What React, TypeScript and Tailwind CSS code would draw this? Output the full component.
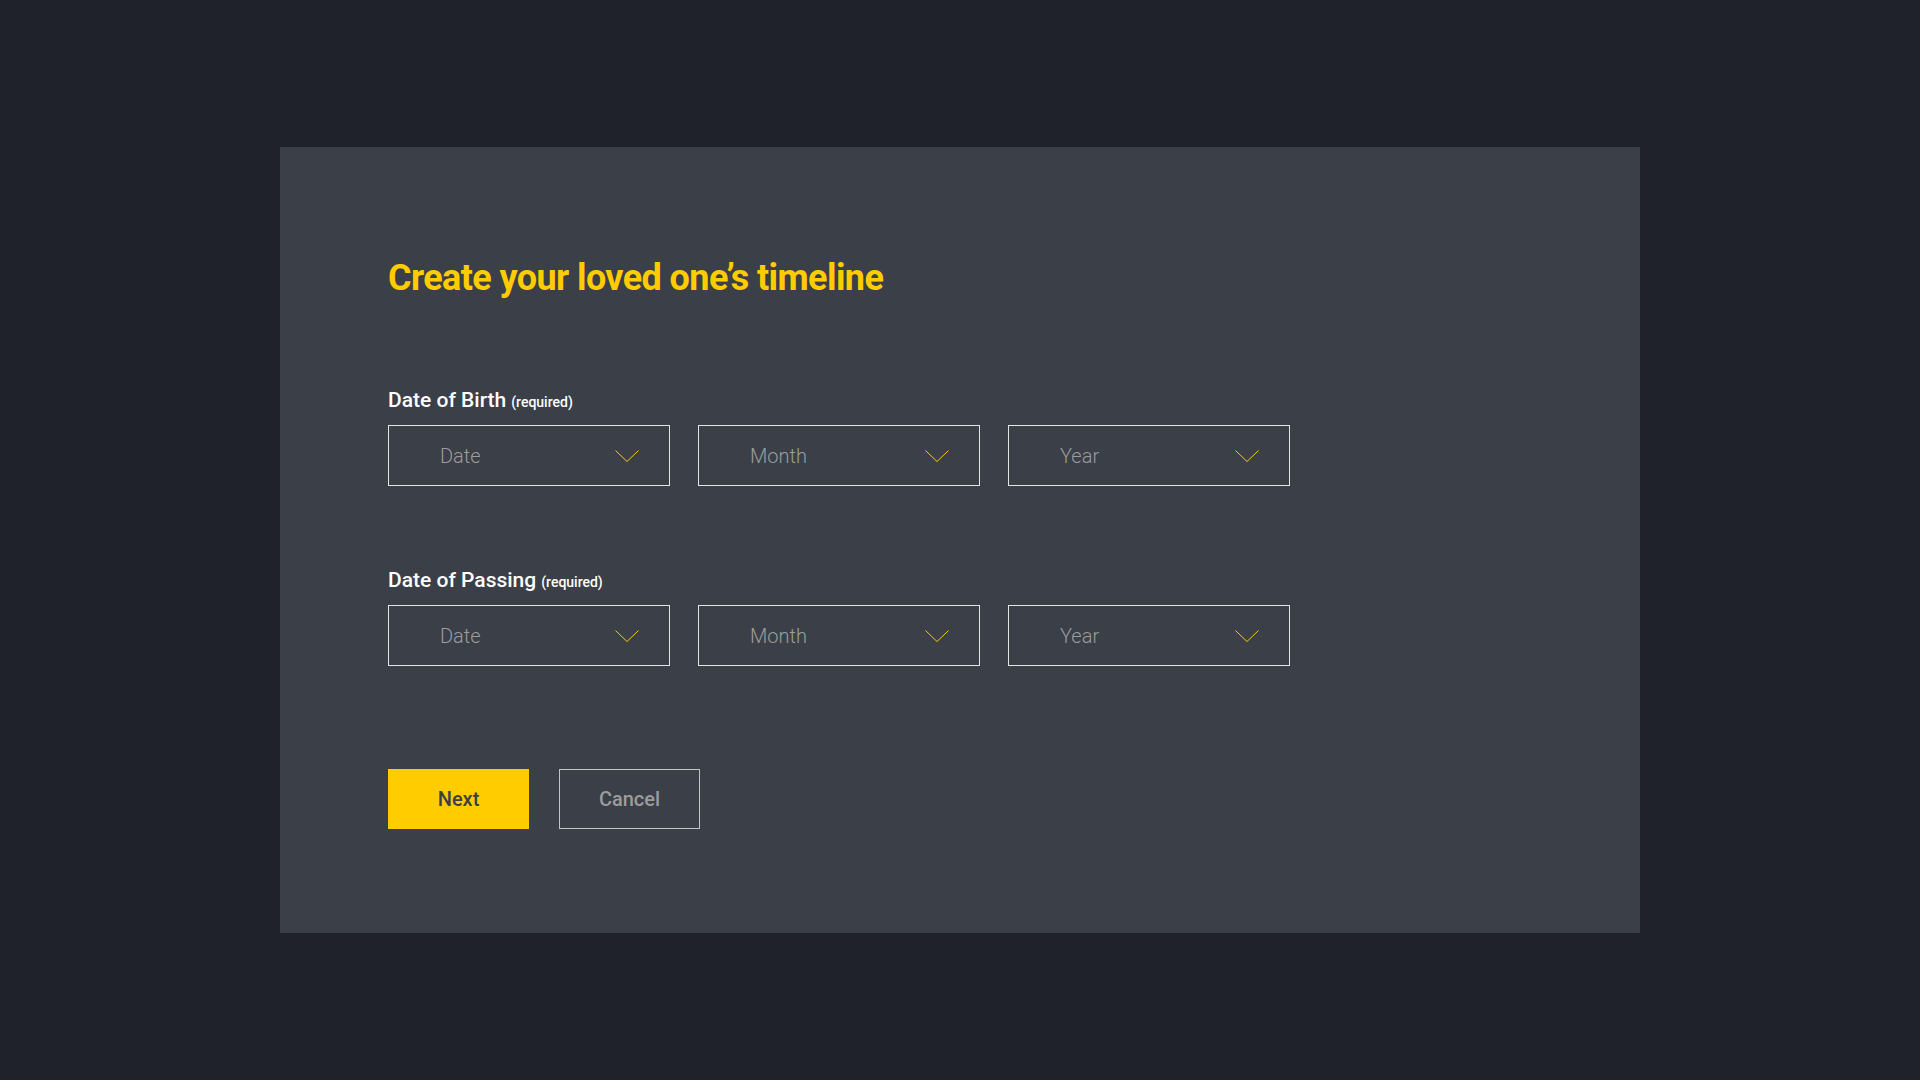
import React from 'react';

const FIELDS = ['Date', 'Month', 'Year'];

function Chevron() {
  return (
    <svg width="24" height="12" viewBox="0 0 24 12" fill="none" className="shrink-0">
      <polyline points="0.5,0.5 12,11.5 23.5,0.5" stroke="#ffcc00" strokeWidth="1" />
    </svg>
  );
}

function SelectBox({ label }: { label: string }) {
  return (
    <button className="w-[282px] h-[61px] border border-[#e4e4e4] flex items-center justify-between pl-[51px] pr-[30px] text-left">
      <span className="text-[20px] leading-none font-light text-[#9c9c9c]">{label}</span>
      <Chevron />
    </button>
  );
}

function DateGroup({ title }: { title: string }) {
  return (
    <div>
      <div className="flex items-baseline gap-[5px] h-[21px] leading-[21px]">
        <span className="text-[21px] font-medium text-white">{title}</span>
        <span className="text-[14px] font-medium text-white">(required)</span>
      </div>
      <div className="mt-[14px] flex gap-[28px]">
        {FIELDS.map((f) => (
          <SelectBox key={f} label={f} />
        ))}
      </div>
    </div>
  );
}

export default function App() {
  return (
    <div className="min-h-screen w-full bg-[#1f222b] flex items-center justify-center font-['Roboto',sans-serif]">
      <div className="w-[1360px] h-[786px] bg-[#3b3f48] pl-[108px] pt-[113px]">
        <h1 className="text-[36px] leading-[36px] font-bold text-[#ffcc00] tracking-[-0.6px]">
          Create your loved one’s timeline
        </h1>
        <div className="mt-[94px]">
          <DateGroup title="Date of Birth" />
        </div>
        <div className="mt-[84px]">
          <DateGroup title="Date of Passing" />
        </div>
        <div className="mt-[103px] flex gap-[30px]">
          <button className="w-[141px] h-[60px] bg-[#ffcc00] text-[#3b3f48] text-[20px] font-medium">Next</button>
          <button className="w-[141px] h-[60px] border border-[#c4c4c4] text-[#9c9c9c] text-[20px] font-medium">Cancel</button>
        </div>
      </div>
    </div>
  );
}
